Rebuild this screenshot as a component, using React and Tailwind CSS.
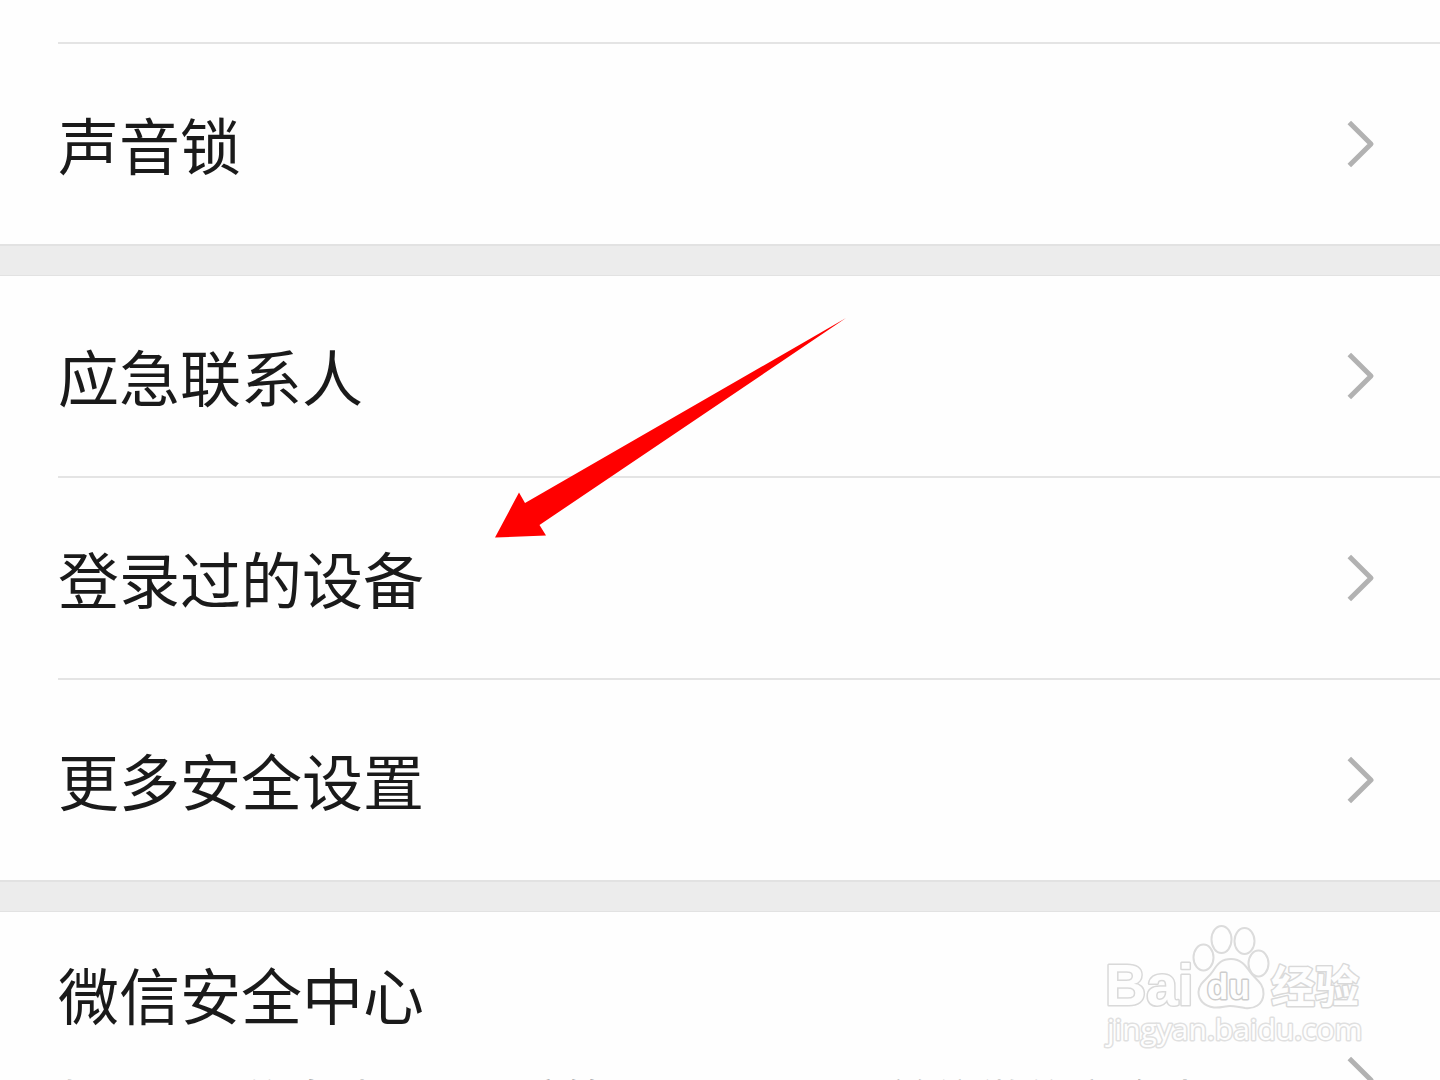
function Chevron() {
  return (
    <svg width="30" height="50" viewBox="0 0 30 50" fill="none" aria-hidden="true" className="shrink-0">
      <path d="M3.300 3.500 L25 25 L3.300 46.500" stroke="#b2b2b2" strokeWidth="5" strokeLinejoin="round" />
    </svg>
  );
}

function Row({ label }) {
  return (
    <button type="button" className="flex h-50 w-full items-center justify-between pr-16 text-left">
      <span className="text-[61px] leading-20">{label}</span>
      <Chevron />
    </button>
  );
}

function Group({ labels }) {
  return (
    <ul className="divide-y-2 divide-[#e4e4e4] pl-[58px]">
      {labels.map((label) => (
        <li key={label}>
          <Row label={label} />
        </li>
      ))}
    </ul>
  );
}

function Band() {
  return <div className="h-8 border-t-2 border-b border-[#e2e2e2] bg-[#ececec]" />;
}

function Pointer() {
  return (
    <svg
      className="pointer-events-none absolute top-[318px] left-[495px]"
      width="352"
      height="221"
      viewBox="0 0 352 221"
      aria-hidden="true"
    >
      <path d="M351 0 L30 185 L24 174.5 L0 219.5 L51 217.5 L44.5 207 Z" fill="#ff0000" />
    </svg>
  );
}

function Watermark() {
  return (
    <svg
      className="pointer-events-none absolute top-[915px] right-[60px]"
      width="290"
      height="140"
      viewBox="0 0 290 140"
      fill="#fefefe"
      stroke="#dcdcdc"
      strokeWidth="2"
      strokeLinejoin="round"
      aria-label="Baidu 经验"
    >
      <g fontFamily='"Liberation Sans", "Noto Sans CJK SC", sans-serif' fontWeight="700">
        <g stroke="#d9d9d9" strokeWidth="3">
          <text x="15" y="90" fontSize="57" style={{ paintOrder: "stroke" }}>Bai</text>
          <text x="181" y="88" fontSize="44" style={{ paintOrder: "stroke" }}>经验</text>
        </g>
        <ellipse cx="113.500" cy="42.500" rx="10" ry="13" />
        <ellipse cx="131.500" cy="24.500" rx="10" ry="13.500" />
        <ellipse cx="154.500" cy="26" rx="10" ry="13" />
        <ellipse cx="168.500" cy="48.500" rx="10" ry="13" />
        <path d="M141 44 C151 44 156 51 160 57 C165 64 174 68 173.500 79 C173 90 164 94 155 93 C148 92 145 91 140 91 C135 91 131 93 124 92.500 C114 91 108.500 85 108.500 77 C109 67 118 64 123 56 C128 48 132 44 141 44 Z" />
        <text x="117" y="84" fontSize="35" stroke="#cdcdcd" strokeWidth="3" style={{ paintOrder: "stroke" }}>du</text>
      </g>
      <text
        x="17"
        y="125"
        fontFamily='"Open Sans", "Noto Sans", sans-serif'
        fontSize="30"
        stroke="#e0e0e0"
        strokeWidth="3"
        style={{ paintOrder: "stroke" }}
      >
        jingyan.baidu.com
      </text>
    </svg>
  );
}

export default function App() {
  return (
    <main className="relative max-h-screen overflow-hidden bg-[#fefefe] font-['Noto_Sans_CJK_SC',sans-serif] text-[#1a1a1a]">
      <div className="ml-[58px] h-11 border-b-2 border-[#e4e4e4]" />
      <Group labels={["声音锁"]} />
      <Band />
      <Group labels={["应急联系人", "登录过的设备", "更多安全设置"]} />
      <Band />
      <button type="button" className="flex w-full items-center justify-between py-[42px] pr-16 pl-[58px] text-left">
        <span className="flex flex-col gap-8 pb-3">
          <span className="text-[61px] leading-20">微信安全中心</span>
          <span className="pr-20 text-[46px] leading-16 text-[#aaaaaa]">
            如遇账号信息泄露、诈骗等账号问题，可前往微信安全中心。
          </span>
        </span>
        <Chevron />
      </button>
      <Pointer />
      <Watermark />
    </main>
  );
}
